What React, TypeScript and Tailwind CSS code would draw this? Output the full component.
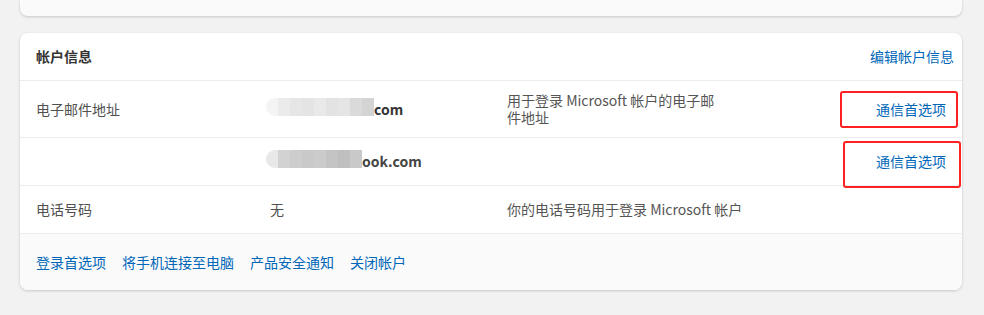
const font = { fontFamily: '"Noto Sans CJK SC", "Noto Sans", sans-serif' };

function Blur(props: { cells: string[] }) {
	return (
		<span className="inline-flex h-[18px] overflow-hidden rounded-l-full blur-[0.6px]">
			{props.cells.map((c, i) => (
				<span key={i} className="h-full w-[12px]" style={{ backgroundColor: c }} />
			))}
		</span>
	);
}

function Row(props: {
	label?: string;
	value: React.ReactNode;
	desc?: React.ReactNode;
	action?: string;
	boxClass?: string;
	height: string;
}) {
	return (
		<div className={`relative flex items-center border-b border-[#ececec] ${props.height}`}>
			<div className="w-[250px] shrink-0 pl-4 text-[#505050]">{props.label}</div>
			<div className="w-[237px] shrink-0 font-semibold text-[#333]">{props.value}</div>
			<div className="w-[225px] shrink-0 leading-[17px] text-[#555]">{props.desc}</div>
			<div className="flex-1 pr-4 text-right text-[#0067b8]">{props.action}</div>
			{props.boxClass && (
				<div className={`absolute rounded-[3px] border-2 border-[#ff2020] ${props.boxClass}`} />
			)}
		</div>
	);
}

export default function App() {
	return (
		<div className="h-[315px] w-[984px] overflow-hidden bg-[#f2f2f2] text-[14px]" style={font}>
			<div className="ml-[20px] h-[16px] w-[942px] rounded-b-lg bg-[#fafafa] shadow-[0_1px_3px_rgba(0,0,0,0.18)]" />
			<div className="ml-[20px] mt-[17px] w-[942px] overflow-hidden rounded-lg bg-white shadow-[0_1px_3px_rgba(0,0,0,0.18)]">
				<div className="flex h-[48px] items-center justify-between border-b border-[#ececec] pl-4 pr-2">
					<span className="font-semibold text-[#333]">帐户信息</span>
					<span className="text-[#0067b8]">编辑帐户信息</span>
				</div>
				<Row
					height="h-[57px]"
					label="电子邮件地址"
					value={
						<span className="flex items-center">
							<span className="-ml-[4px]">
								<Blur cells={["#f4f4f4", "#ebebeb", "#e6e6e6", "#e4e4e4", "#e9e9e9", "#e3e3e3", "#e5e5e5", "#dadada", "#d4d4d4"]} />
							</span>
							<span>com</span>
						</span>
					}
					desc={<span className="block w-[218px]">用于登录 Microsoft 帐户的电子邮件地址</span>}
					action="通信首选项"
					boxClass="left-[820px] top-[10px] h-[37px] w-[118px]"
				/>
				<Row
					height="h-[48px]"
					value={
						<span className="flex items-center">
							<span className="-ml-[4px]">
								<Blur cells={["#e8e8e8", "#d2d2d2", "#cdcdcd", "#c9c9c9", "#cbcbcb", "#c4c4c4", "#bfbfbf", "#c9c9c9"]} />
							</span>
							<span className="text-[#444]">ook.com</span>
						</span>
					}
					action="通信首选项"
					boxClass="left-[823px] top-[3px] h-[47px] w-[118px]"
				/>
				<Row
					height="h-[48px]"
					label="电话号码"
					value={<span className="font-normal text-[#505050]">无</span>}
					desc={<span className="whitespace-nowrap">你的电话号码用于登录 Microsoft 帐户</span>}
				/>
				<div className="flex h-[56px] items-center gap-4 bg-[#fafafa] px-4 text-[#0067b8]">
					<span>登录首选项</span>
					<span>将手机连接至电脑</span>
					<span>产品安全通知</span>
					<span>关闭帐户</span>
				</div>
			</div>
		</div>
	);
}
